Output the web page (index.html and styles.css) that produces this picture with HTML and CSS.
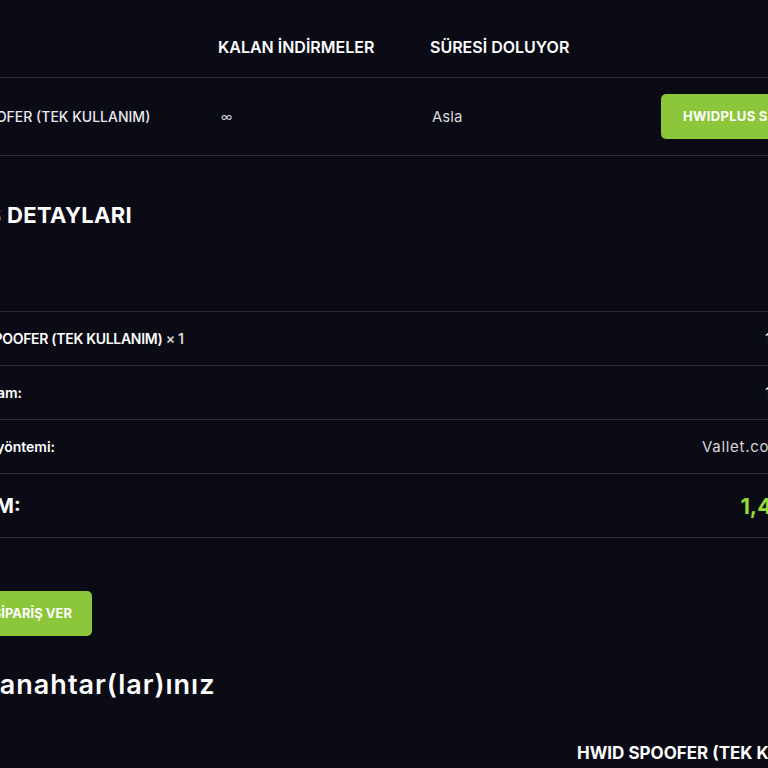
FILE: index.html
```html
<!DOCTYPE html>
<html lang="tr">
<head>
  <meta charset="UTF-8">
  <meta name="viewport" content="width=device-width, initial-scale=1.0">
  <title>Hesabım - Siparişler</title>
  <link rel="stylesheet" href="styles.css">
</head>
<body>
  <div class="page">
    <table class="downloads">
      <thead>
        <tr>
          <th class="col-product">ÜRÜN</th>
          <th class="col-left">KALAN İNDİRMELER</th>
          <th class="col-expires">SÜRESİ DOLUYOR</th>
          <th class="col-file"></th>
        </tr>
      </thead>
      <tbody>
        <tr>
          <td class="product-name">HWID SPOOFER (TEK KULLANIM)</td>
          <td class="infinite">∞</td>
          <td class="expires">Asla</td>
          <td><a href="#" class="btn btn-download">HWIDPLUS SPOOFER.ZIP</a></td>
        </tr>
      </tbody>
    </table>

    <section class="order-details">
      <h2>SİPARİŞ DETAYLARI</h2>
      <table class="details">
        <tbody>
          <tr>
            <th class="item">HWID SPOOFER (TEK KULLANIM) <span class="qty">× 1</span></th>
            <td>1,49 $</td>
          </tr>
          <tr>
            <th>Ara toplam:</th>
            <td>1,49 $</td>
          </tr>
          <tr>
            <th>Ödeme yöntemi:</th>
            <td class="method">Vallet.com ile</td>
          </tr>
          <tr class="total">
            <th>TOPLAM:</th>
            <td>1,49 $</td>
          </tr>
        </tbody>
      </table>
      <a href="#" class="btn btn-order">TEKRAR SİPARİŞ VER</a>
    </section>

    <section class="licenses">
      <h2>Lisans anahtar(lar)ınız</h2>
      <div class="license-card">
        <h3>HWID SPOOFER (TEK KULLANIM)</h3>
      </div>
    </section>
  </div>
</body>
</html>
```

FILE: styles.css
```css
* {
    box-sizing: border-box;
}

html, body {
    background-color: #0b0b16;
}

body {
    font-family: Inter, "Open Sans", Arial, sans-serif;
    color: #ffffff;
    margin: 0;
    padding: 0;
    overflow: hidden;
    height: 768px;
}

.page {
    width: 1100px;
    margin-left: -100px;
    padding-top: 17px;
}

table {
    border-collapse: collapse;
    table-layout: fixed;
}

/* downloads */

.downloads {
    width: 100%;
}

.downloads th {
    text-align: left;
    font-size: 16px;
    font-weight: 600;
    line-height: 20px;
    padding: 20px 0;
    border-bottom: 1px solid #2a2a36;
}

.downloads .col-product {
    width: 318px;
    padding-left: 25px;
}
.downloads .col-left { width: 212px; }
.downloads .col-expires { width: 231px; }

.downloads td {
    font-size: 15px;
    line-height: 20px;
    padding: 16px 0;
    border-bottom: 1px solid #2a2a36;
    vertical-align: middle;
}

.downloads .product-name {
    font-size: 14px;
    font-weight: 500;
    color: #e8e8ec;
    padding-left: 25px;
}

.downloads .infinite {
    font-size: 12px;
    color: #d8d8dc;
    padding-left: 3px;
}

.downloads .expires {
    color: #d6d6da;
    padding-left: 2px;
}

.btn {
    display: inline-block;
    background-color: #8cc63a;
    color: #ffffff;
    text-decoration: none;
    font-size: 13px;
    font-weight: 700;
    line-height: 19px;
    padding: 13px 20px;
    border-radius: 5px;
    white-space: nowrap;
}

.btn-download {
    padding-left: 22px;
    letter-spacing: 0.3px;
}

/* order details */

.order-details h2 {
    font-size: 22px;
    font-weight: 700;
    letter-spacing: 0.3px;
    line-height: 28px;
    margin: 45px 0 82px 15px;
}

.details {
    width: 862px;
    margin-left: 44px;
    border-top: 1px solid #2a2a36;
}

.details th,
.details td {
    font-size: 14px;
    line-height: 19px;
    padding: 17px 0;
    border-bottom: 1px solid #2a2a36;
}

.details th {
    text-align: left;
    font-weight: 600;
}

.details th.item {
    letter-spacing: -0.3px;
}

.details td {
    text-align: right;
    font-weight: 500;
}

.details td.method {
    font-size: 15px;
    font-weight: 400;
    color: #d6d6da;
    letter-spacing: 0.7px;
}

.qty {
    color: #d6d6da;
}

.details .total th {
    font-size: 20px;
    font-weight: 700;
    line-height: 26px;
    padding: 19px 0 18px;
    text-indent: -16px;
}

.details .total td {
    font-size: 22px;
    font-weight: 700;
    line-height: 26px;
    padding: 19px 0 18px;
    color: #96d93a;
}

.btn-order {
    margin-top: 53px;
    margin-left: 17px;
}

/* licenses */

.licenses h2 {
    font-size: 27px;
    font-weight: 600;
    letter-spacing: 1px;
    line-height: 32px;
    margin: 33px 0 0 2px;
}

.license-card {
    padding-top: 42px;
    padding-left: 677px;
}

.license-card h3 {
    font-size: 17px;
    font-weight: 700;
    margin: 0;
    white-space: nowrap;
}
```
